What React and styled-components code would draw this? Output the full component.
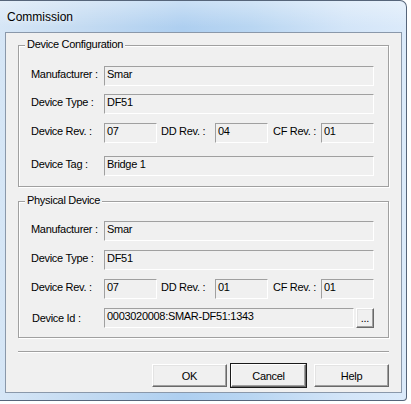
import React from "react";
import styled, { createGlobalStyle } from "styled-components";

const Global = createGlobalStyle`
  html, body { margin: 0; padding: 0; background: #ffffff; }
  body {
    width: 411px; height: 404px; overflow: hidden;
    font-family: "Liberation Sans", Arial, sans-serif;
  }
  * { box-sizing: border-box; }
`;

const Window = styled.div`
  width: 407px;
  height: 401px;
  display: flex;
  flex-direction: column;
  padding: 0 4px 7px 5px;
  border: 1px solid #56657a;
  border-left: none;
  border-radius: 0 7px 4px 0;
  background:
    linear-gradient(180deg, rgba(255,255,255,0.35) 0px, rgba(255,255,255,0) 26px),
    linear-gradient(90deg, #d6e6f6 0%, #c4dbf2 20%, #aecff0 45%, #b9d6f2 62%, #d3e5f8 85%, #dbeafa 100%);
`;

const TitleBar = styled.div`
  height: 31px;
  padding: 1px 0 0 2px;
  line-height: 30px;
  font-size: 12px;
  color: #000;
  text-shadow: 0 0 6px rgba(255,255,255,0.9);
`;

const Client = styled.div`
  flex: 1;
  display: flex;
  flex-direction: column;
  padding: 12px 12px 5px 12px;
  border: 1px solid #8a98aa;
  background: #f0f0f0;
  font-size: 11px;
  letter-spacing: -0.3px;
  color: #000;
`;

const Group = styled.div`
  position: relative;
  height: ${(p) => p.$h}px;
  padding: ${(p) => p.$pt}px 14px 0 12px;
  margin-bottom: ${(p) => p.$mb}px;
  border: 1px solid #a0a0a0;
  box-shadow: 1px 1px 0 #ffffff, inset 1px 1px 0 #ffffff;
  display: flex;
  flex-direction: column;
`;

const Legend = styled.span`
  position: absolute;
  top: -8px;
  left: 6px;
  padding: 0 2px;
  line-height: 13px;
  background: #f0f0f0;
  white-space: nowrap;
`;

const Row = styled.div`
  display: flex;
  align-items: flex-start;
  height: 20px;
  margin-top: ${(p) => p.$mt || 0}px;
`;

const Label = styled.span`
  flex: none;
  width: ${(p) => p.$w}px;
  padding-left: ${(p) => p.$pl || 0}px;
  padding-top: ${(p) => p.$pt || 1}px;
  line-height: 14px;
  white-space: nowrap;
`;

const Field = styled.div`
  flex: ${(p) => (p.$w ? "none" : "1")};
  width: ${(p) => (p.$w ? `${p.$w}px` : "auto")};
  height: 20px;
  padding: 0 2px;
  line-height: 14px;
  border: 1px solid;
  border-color: #a0a0a0 #ffffff #ffffff #a0a0a0;
  background: #f0f0f0;
  white-space: nowrap;
  overflow: hidden;
`;

const Button = styled.button`
  flex: none;
  width: ${(p) => p.$w || 75}px;
  height: ${(p) => p.$h || 23}px;
  margin-left: ${(p) => p.$ml || 0}px;
  padding: 0;
  font-family: inherit;
  font-size: 11px;
  letter-spacing: -0.3px;
  color: #000;
  background: #f0f0f0;
  border: 1px solid;
  border-color: #ffffff #696969 #696969 #ffffff;
  box-shadow: ${(p) =>
    p.$default
      ? "inset -1px -1px 0 #a0a0a0, 0 0 0 1px #1a1a1a"
      : "inset -1px -1px 0 #a0a0a0, inset 1px 1px 0 #e3e3e3"};
  line-height: ${(p) => p.$lh || 14}px;
`;

const Separator = styled.div`
  height: 2px;
  margin-bottom: 11px;
  border-top: 1px solid #a0a0a0;
  border-bottom: 1px solid #ffffff;
`;

const ButtonRow = styled.div`
  display: flex;
  justify-content: flex-end;
  padding-right: 0;
`;

function RevRow({ mt, dev, dd, cf }) {
  return (
    <Row $mt={mt}>
      <Label $w={73}>Device Rev. :</Label>
      <Field $w={53}>{dev}</Field>
      <Label $w={58} $pl={4}>DD Rev. :</Label>
      <Field $w={53}>{dd}</Field>
      <Label $w={53} $pl={5}>CF Rev. :</Label>
      <Field $w={53}>{cf}</Field>
    </Row>
  );
}

export default function App() {
  return (
    <>
      <Global />
      <Window>
        <TitleBar>Commission</TitleBar>
        <Client>
          <Group $h={142} $pt={20} $mb={14}>
            <Legend>Device Configuration</Legend>
            <Row>
              <Label $w={73}>Manufacturer :</Label>
              <Field>Smar</Field>
            </Row>
            <Row $mt={8}>
              <Label $w={73}>Device Type :</Label>
              <Field>DF51</Field>
            </Row>
            <RevRow mt={9} dev="07" dd="04" cf="01" />
            <Row $mt={13}>
              <Label $w={73}>Device Tag :</Label>
              <Field>Bridge 1</Field>
            </Row>
          </Group>
          <Group $h={137} $pt={19} $mb={13}>
            <Legend>Physical Device</Legend>
            <Row>
              <Label $w={73}>Manufacturer :</Label>
              <Field>Smar</Field>
            </Row>
            <Row $mt={9}>
              <Label $w={73}>Device Type :</Label>
              <Field>DF51</Field>
            </Row>
            <RevRow mt={9} dev="07" dd="01" cf="01" />
            <Row $mt={9}>
              <Label $w={73} $pl={1} $pt={3}>Device Id :</Label>
              <Field>0003020008:SMAR-DF51:1343</Field>
              <Button $w={18} $h={20} $ml={2} $lh={12}>...</Button>
            </Row>
          </Group>
          <Separator />
          <ButtonRow>
            <Button>OK</Button>
            <Button $default $ml={4}>Cancel</Button>
            <Button $ml={8}>Help</Button>
          </ButtonRow>
        </Client>
      </Window>
    </>
  );
}
